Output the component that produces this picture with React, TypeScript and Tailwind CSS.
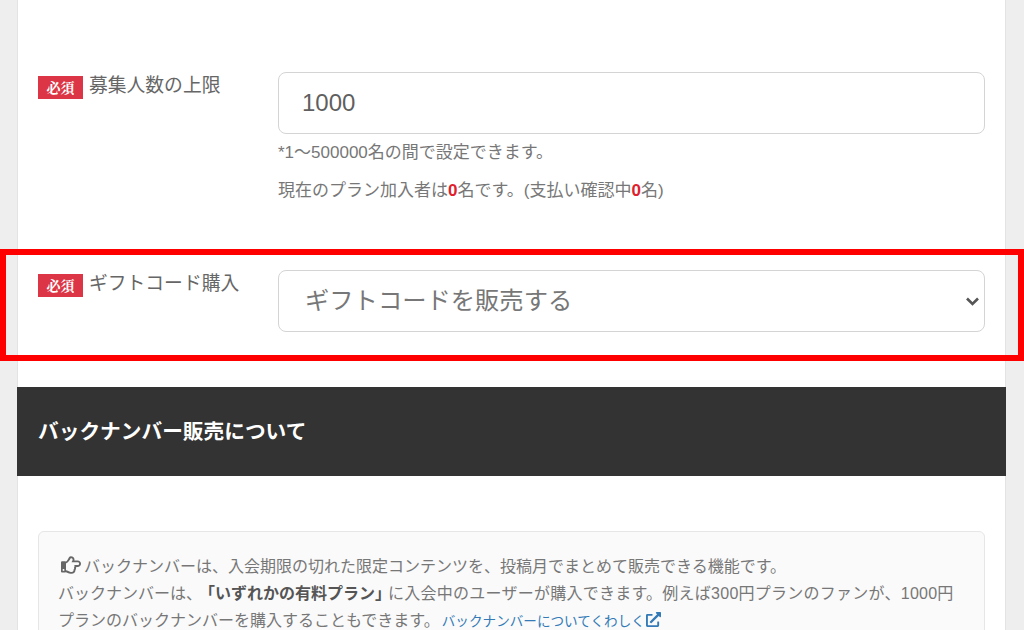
import React from "react";
import { FaRegHandPointRight, FaExternalLinkAlt } from "react-icons/fa";

const font = { fontFamily: '"Liberation Sans","Noto Sans CJK JP",sans-serif' };

function Badge() {
  return (
    <span className="flex h-[23px] w-[45px] shrink-0 items-center justify-center bg-[#dc3545] text-[14px] font-bold text-white" style={{ fontFamily: '"Noto Serif CJK JP","Noto Sans CJK JP",serif' }}>
      必須
    </span>
  );
}

function Label({ text }: { text: string }) {
  return (
    <div className="flex w-[240px] shrink-0 items-start pt-[2px]">
      <div className="mt-[2px]"><Badge /></div>
      <span className="ml-[6px] text-[18.8px] leading-[24px] text-[#666]">{text}</span>
    </div>
  );
}

export default function App() {
  return (
    <div className="relative h-[630px] w-[1024px] overflow-hidden bg-[#eeeeee]" style={font}>
      <div className="ml-[17px] h-[630px] w-[989px] border-x border-x-[#e3e3e3] bg-white">
        <div className="px-[20px] pt-[72px]">
          <div className="flex">
            <Label text="募集人数の上限" />
            <div className="min-w-0 flex-1">
              <div className="flex h-[62px] items-center rounded-[8px] border border-[#d4d4d4] bg-white pl-[23px] text-[24px] text-[#5f5f5f]">1000</div>
              <p className="mt-[7px] text-[17px] leading-[24px] text-[#777]">*1〜500000名の間で設定できます。</p>
              <p className="mt-[14px] text-[17px] leading-[24px] text-[#777]">
                現在のプラン加入者は<b className="text-[#e0202c]">0</b>名です。(支払い確認中<b className="text-[#e0202c]">0</b>名)
              </p>
            </div>
          </div>
          <div className="mt-[67px] flex">
            <Label text="ギフトコード購入" />
            <div className="flex h-[62px] min-w-0 flex-1 items-center justify-between rounded-[8px] border border-[#d4d4d4] bg-white pl-[26px] pr-[5px] text-[24.3px] text-[#777]">
              <span>ギフトコードを販売する</span>
              <svg viewBox="0 0 13 9" className="h-[9px] w-[13px]" fill="none" stroke="#555" strokeWidth="2.6">
                <polyline points="1,1.5 6.5,7 12,1.5" />
              </svg>
            </div>
          </div>
        </div>
        <div className="-mx-px mt-[55px] flex h-[89px] items-center bg-[#333333] px-[21px] text-[20.7px] font-bold text-white">
          バックナンバー販売について
        </div>
        <div className="mx-[20px] mt-[55px] h-[120px] rounded-[6px] border border-[#e6e6e6] bg-[#fafafa] px-[19px] pt-[21px] text-[16px] leading-[27px] text-[#777]">
          <FaRegHandPointRight className="mx-[3px] inline-block align-[-3px] text-[20px] text-[#666]" />
          <span>バックナンバーは、入会期限の切れた限定コンテンツを、投稿月でまとめて販売できる機能です。</span>
          <br />
          バックナンバーは、<b className="ml-[5px] mr-[-3px] text-[#555]">「いずれかの有料プラン」</b>
          <span className="tracking-[0.25px]">に入会中のユーザーが購入できます。例えば300円プランのファンが、1000円</span>
          <br />
          プランのバックナンバーを購入することもできます。<span className="ml-[2px] text-[13.6px] text-[#337ab7]">バックナンバーについてくわしく</span>
          <FaExternalLinkAlt className="ml-[1px] inline-block align-[-1px] text-[15px] text-[#337ab7]" />
        </div>
      </div>
      <div className="absolute left-0 top-[249px] h-[112px] w-[1024px] border-[6px] border-[#ff0000]" />
    </div>
  );
}
